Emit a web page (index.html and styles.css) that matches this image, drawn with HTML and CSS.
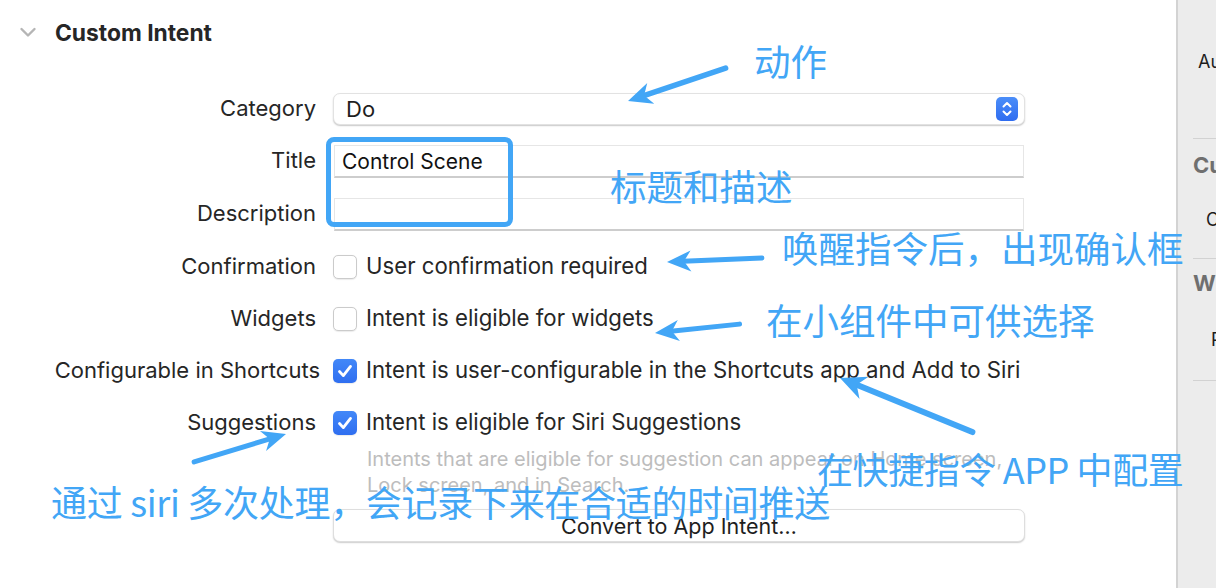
FILE: index.html
```html
<!DOCTYPE html>
<html lang="en">
<head>
<meta charset="utf-8">
<title>Custom Intent</title>
<link rel="stylesheet" href="styles.css">
</head>
<body>
<div class="window">
  <main class="main">
    <header class="section-head">
      <svg class="chevron" width="18" height="12" viewBox="0 0 18 12"><path d="M2.5 3 L9 9.5 L15.5 3" fill="none" stroke="#b5b5b5" stroke-width="2.4" stroke-linecap="round" stroke-linejoin="round"/></svg>
      <h2 class="section-title">Custom Intent</h2>
    </header>

    <div class="form">
      <div class="lbl">Category</div>
      <div class="popup">
        <span class="popup-value">Do</span>
        <span class="stepper">
          <svg width="22" height="24" viewBox="0 0 22 24"><path d="M7.5 9.5 L11 6 L14.5 9.5 M7.5 14.5 L11 18 L14.5 14.5" fill="none" stroke="#fff" stroke-width="2" stroke-linecap="round" stroke-linejoin="round"/></svg>
        </span>
      </div>

      <div class="lbl">Title</div>
      <div class="field">Control Scene</div>

      <div class="lbl">Description</div>
      <div class="field"></div>

      <div class="lbl">Confirmation</div>
      <div class="check-row"><span class="cb"></span><span class="ct">User confirmation required</span></div>

      <div class="lbl">Widgets</div>
      <div class="check-row"><span class="cb"></span><span class="ct">Intent is eligible for widgets</span></div>

      <div class="lbl lbl-long">Configurable in Shortcuts</div>
      <div class="check-row"><span class="cb cb-on"><svg width="24" height="24" viewBox="0 0 24 24"><path d="M6.5 12.5 L10.3 16.6 L17.5 7.4" fill="none" stroke="#fff" stroke-width="2.8" stroke-linecap="round" stroke-linejoin="round"/></svg></span><span class="ct">Intent is user-configurable in the Shortcuts app and Add to Siri</span></div>

      <div class="lbl">Suggestions</div>
      <div class="check-row"><span class="cb cb-on"><svg width="24" height="24" viewBox="0 0 24 24"><path d="M6.5 12.5 L10.3 16.6 L17.5 7.4" fill="none" stroke="#fff" stroke-width="2.8" stroke-linecap="round" stroke-linejoin="round"/></svg></span><span class="ct">Intent is eligible for Siri Suggestions</span></div>

      <div class="spacer"></div>
      <div class="help">Intents that are eligible for suggestion can appear on Home screen,<br>Lock screen, and in Search.</div>

      <div class="spacer"></div>
      <button class="convert" type="button">Convert to App Intent…</button>
    </div>

    <div class="highlight-box"></div>

    <svg class="arrows" width="1176" height="588" viewBox="0 0 1176 588">
      <g fill="#42a6f6" stroke="#42a6f6">
        <g transform="translate(628 101) rotate(161.4)">
          <line x1="-103" y1="0" x2="-16" y2="0" stroke-width="5.5" stroke-linecap="round"/>
          <polygon points="0,0 -24,-11 -17,0 -24,11" stroke="none"/>
        </g>
        <g transform="translate(667 262) rotate(177.6)">
          <line x1="-95" y1="0" x2="-16" y2="0" stroke-width="5" stroke-linecap="round"/>
          <polygon points="0,0 -24,-10.5 -17,0 -24,10.5" stroke="none"/>
        </g>
        <g transform="translate(655 333) rotate(174)">
          <line x1="-85" y1="0" x2="-16" y2="0" stroke-width="5" stroke-linecap="round"/>
          <polygon points="0,0 -24,-10.5 -17,0 -24,10.5" stroke="none"/>
        </g>
        <g transform="translate(840 378) rotate(-157.8)">
          <line x1="-143" y1="0" x2="-16" y2="0" stroke-width="6" stroke-linecap="round"/>
          <polygon points="0,0 -26,-12 -18,0 -26,12" stroke="none"/>
        </g>
        <g transform="translate(286 434) rotate(-16.9)">
          <line x1="-96" y1="0" x2="-16" y2="0" stroke-width="5" stroke-linecap="round"/>
          <polygon points="0,0 -24,-10.5 -17,0 -24,10.5" stroke="none"/>
        </g>
      </g>
    </svg>

    <div class="note note-action">动作</div>
    <div class="note note-title">标题和描述</div>
    <div class="note note-confirm">唤醒指令后，出现确认框</div>
    <div class="note note-widget">在小组件中可供选择</div>
    <div class="note note-shortcut">在快捷指令 APP 中配置</div>
    <div class="note note-siri">通过 siri 多次处理，会记录下来在合适的时间推送</div>
  </main>

  <aside class="sidebar">
    <div class="sb-text sb-au">Automatically</div>
    <div class="sb-divider sb-d1"></div>
    <div class="sb-head sb-cu">Custom Class</div>
    <div class="sb-text sb-c">Class</div>
    <div class="sb-divider sb-d2"></div>
    <div class="sb-head sb-w">Widgets</div>
    <div class="sb-text sb-p">Parameter</div>
    <div class="sb-divider sb-d3"></div>
  </aside>
</div>
</body>
</html>
```

FILE: styles.css
```css
* { box-sizing: border-box; }

html, body {
  margin: 0;
  padding: 0;
  background: #ffffff;
}

body {
  font-family: Inter, "Noto Sans", "Liberation Sans", sans-serif;
  color: #232323;
  width: 1216px;
  height: 588px;
  overflow: hidden;
}

.window {
  display: flex;
  width: 1216px;
  height: 588px;
}

.main {
  position: relative;
  width: 1176px;
  flex: none;
  background: #ffffff;
}

.section-head {
  display: flex;
  align-items: center;
  height: 24px;
  margin-top: 20px;
  padding-left: 19px;
}

.chevron { display: block; }

.section-title {
  margin: 0 0 0 18px;
  font-size: 22.8px;
  font-weight: 700;
  color: #262626;
}

.form {
  display: grid;
  grid-template-columns: 316px 692px;
  grid-auto-rows: auto;
  column-gap: 17px;
  row-gap: 20px;
  margin-top: 49px;
}

.lbl {
  height: 32px;
  line-height: 30px;
  text-align: right;
  font-size: 22px;
  color: #262626;
  white-space: nowrap;
}

.lbl-long { margin-right: -4px; }

.popup {
  height: 32px;
  display: flex;
  align-items: center;
  justify-content: space-between;
  padding: 0 6px 0 12px;
  background: #fff;
  border: 1px solid #e2e2e2;
  border-radius: 7px;
  box-shadow: 0 1px 1.5px rgba(0,0,0,0.22);
  font-size: 22px;
  color: #1e1e1e;
}

.stepper {
  width: 22px;
  height: 24px;
  border-radius: 5px;
  background: linear-gradient(#4b8ef9, #2f6cf0);
  display: flex;
}

.field {
  height: 33px;
  width: 690px;
  margin-left: 1px;
  border: 1px solid #e6e6e6;
  border-bottom: 2px solid #cdcdcd;
  padding-left: 7px;
  line-height: 31px;
  font-size: 21px;
  color: #111;
}

.check-row {
  height: 32px;
  display: flex;
  align-items: center;
  gap: 9px;
  font-size: 22.2px;
  color: #262626;
  white-space: nowrap;
}

.ct {
  line-height: 28px;
  margin-top: -2px;
}

.cb {
  width: 24px;
  height: 24px;
  flex: none;
  border-radius: 5px;
  background: #fff;
  border: 1px solid #cbcbcb;
  box-shadow: 0 0.5px 1px rgba(0,0,0,0.08);
  display: flex;
}

.cb-on {
  border: none;
  background: linear-gradient(#4288f8, #2f6ef0);
}

.spacer { height: 0; }

.help {
  margin-top: -13px;
  padding-left: 34px;
  font-size: 20px;
  line-height: 26px;
  color: #bdbdbd;
  white-space: nowrap;
}

.convert {
  margin-top: -9px;
  height: 33px;
  width: 692px;
  background: #fff;
  border: 1px solid #dedede;
  border-radius: 7px;
  box-shadow: 0 1px 1.5px rgba(0,0,0,0.2);
  font-family: Inter, "Noto Sans", "Liberation Sans", sans-serif;
  font-size: 21.5px;
  color: #1e1e1e;
  padding: 0;
  line-height: 30px;
}

.highlight-box {
  position: absolute;
  left: 326px;
  top: 137px;
  width: 187px;
  height: 90px;
  border: 5px solid #42a6f6;
  border-radius: 8px;
}

.arrows {
  position: absolute;
  left: 0;
  top: 0;
  pointer-events: none;
}

.note {
  position: absolute;
  font-family: "Noto Sans CJK SC", "Noto Sans", sans-serif;
  font-size: 36.5px;
  line-height: 38px;
  font-weight: 400;
  color: #42a6f6;
  white-space: nowrap;
}

.note-action { left: 754px; top: 42px; }
.note-title { left: 610px; top: 167px; }
.note-confirm { left: 782px; top: 229px; }
.note-widget { left: 766px; top: 301px; }
.note-shortcut { left: 817px; top: 449px; font-size: 36px; letter-spacing: -0.4px; }
.note-siri { left: 51px; top: 482px; font-size: 36px; letter-spacing: -0.3px; }

.sidebar {
  flex: 1;
  height: 588px;
  background: #ececec;
  border-left: 2px solid #d3d3d3;
  overflow: hidden;
  white-space: nowrap;
}

.sb-text {
  font-size: 18px;
  line-height: 24px;
  color: #1d1d1d;
}

.sb-head {
  font-size: 22px;
  line-height: 26px;
  font-weight: 700;
  color: #6f6f6f;
  padding-left: 15px;
}

.sb-divider {
  height: 1px;
  margin-left: 15px;
  background: #d2d2d2;
}

.sb-au { margin-top: 50px; padding-left: 20px; }
.sb-d1 { margin-top: 64px; }
.sb-cu { margin-top: 13px; }
.sb-c { margin-top: 30px; padding-left: 28px; }
.sb-d2 { margin-top: 26px; }
.sb-w { margin-top: 11px; }
.sb-p { margin-top: 32px; padding-left: 33px; }
.sb-d3 { margin-top: 28px; }
```
